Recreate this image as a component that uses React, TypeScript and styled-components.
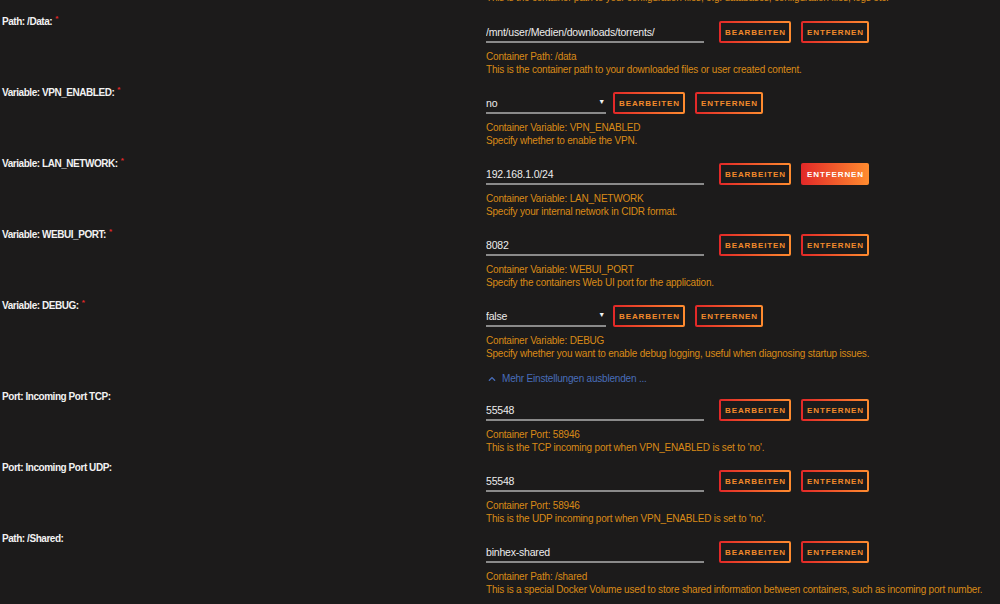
import { FC } from "react";
import styled, { createGlobalStyle, css } from "styled-components";
import { FaChevronUp } from "react-icons/fa";

const GlobalStyle = createGlobalStyle`
  html, body {
    margin: 0;
    padding: 0;
    background: #1c1b1b;
    color: #f2f2f2;
    font-family: "Liberation Sans", Arial, sans-serif;
    font-size: 10px;
    letter-spacing: -0.2px;
  }
`;

const Page = styled.div`
  width: 1000px;
  height: 604px;
  overflow: hidden;
`;

const PrevNote = styled.div`
  margin: -9px 0 4px 486px;
  line-height: 13px;
  color: #d98a17;
  white-space: nowrap;
`;

const Row = styled.div`
  display: grid;
  grid-template-columns: 486px 1fr;
`;

const Label = styled.div`
  padding: 4px 0 0 2px;
  line-height: 14px;
  font-size: 10px;
  font-weight: 700;
  letter-spacing: -0.45px;
  color: #f2f2f2;
  white-space: nowrap;
  sup {
    color: #e22828;
    font-size: 8px;
    margin-left: 3px;
  }
`;

const Field = styled.div`
  padding-top: 13px;
  padding-bottom: 3px;
`;

const Controls = styled.div<{ $narrow?: boolean }>`
  display: flex;
  align-items: center;
  height: 22px;
  gap: 10px;
  > :first-child {
    margin-right: ${(p) => (p.$narrow ? "-3px" : "5px")};
  }
`;

const fieldLine = css`
  height: 22px;
  box-sizing: border-box;
  padding: 1px 0 0 0;
  background: transparent;
  border: none;
  border-bottom: 2px solid #8a8a8a;
  color: #ececec;
  font: inherit;
  font-size: 10.5px;
  letter-spacing: -0.2px;
  outline: none;
`;

const TextInput = styled.input`
  ${fieldLine};
  width: 218px;
`;

const SelectWrap = styled.div`
  position: relative;
  width: 120px;
  height: 22px;
`;

const Select = styled.select`
  ${fieldLine};
  appearance: none;
  width: 100%;
`;

const Caret = styled.span`
  position: absolute;
  right: 1px;
  top: 6px;
  font-size: 7px;
  color: #f2f2f2;
  pointer-events: none;
`;

const Button = styled.button<{ $hot?: boolean }>`
  height: 22px;
  padding: 0 3px 0 4px;
  border-radius: 2px;
  border: 2px solid transparent;
  font-family: "Liberation Sans", Arial, sans-serif;
  font-size: 8px;
  font-weight: 700;
  letter-spacing: 0.9px;
  text-transform: uppercase;
  cursor: pointer;
  ${(p) =>
    p.$hot
      ? css`
          color: #fff;
          background: linear-gradient(90deg, #e22828 0%, #ff8c2f 100%) border-box;
        `
      : css`
          color: #f28a2b;
          background:
            linear-gradient(#1c1b1b, #1c1b1b) padding-box,
            linear-gradient(90deg, #e22828 0%, #ff8c2f 100%) border-box;
        `}
`;

const Note = styled.div`
  margin-top: 7px;
  line-height: 13px;
  color: #d98a17;
  white-space: nowrap;
`;

const MoreLink = styled.a`
  display: flex;
  align-items: center;
  gap: 6px;
  margin: 9px 0 0 488px;
  line-height: 14px;
  color: #486dba;
  text-decoration: none;
  cursor: pointer;
`;

interface IConfigRow {
  label: string;
  required?: boolean;
  value: string;
  options?: string[];
  hot?: boolean;
  target: string;
  description: string;
}

const rows: IConfigRow[] = [
  {
    label: "Path: /Data:",
    required: true,
    value: "/mnt/user/Medien/downloads/torrents/",
    target: "Container Path: /data",
    description: "This is the container path to your downloaded files or user created content.",
  },
  {
    label: "Variable: VPN_ENABLED:",
    required: true,
    value: "no",
    options: ["yes", "no"],
    target: "Container Variable: VPN_ENABLED",
    description: "Specify whether to enable the VPN.",
  },
  {
    label: "Variable: LAN_NETWORK:",
    required: true,
    value: "192.168.1.0/24",
    hot: true,
    target: "Container Variable: LAN_NETWORK",
    description: "Specify your internal network in CIDR format.",
  },
  {
    label: "Variable: WEBUI_PORT:",
    required: true,
    value: "8082",
    target: "Container Variable: WEBUI_PORT",
    description: "Specify the containers Web UI port for the application.",
  },
  {
    label: "Variable: DEBUG:",
    required: true,
    value: "false",
    options: ["true", "false"],
    target: "Container Variable: DEBUG",
    description:
      "Specify whether you want to enable debug logging, useful when diagnosing startup issues.",
  },
  {
    label: "Port: Incoming Port TCP:",
    value: "55548",
    target: "Container Port: 58946",
    description: "This is the TCP incoming port when VPN_ENABLED is set to 'no'.",
  },
  {
    label: "Port: Incoming Port UDP:",
    value: "55548",
    target: "Container Port: 58946",
    description: "This is the UDP incoming port when VPN_ENABLED is set to 'no'.",
  },
  {
    label: "Path: /Shared:",
    value: "binhex-shared",
    target: "Container Path: /shared",
    description:
      "This is a special Docker Volume used to store shared information between containers, such as incoming port number.",
  },
];

const ConfigRow: FC<{ row: IConfigRow }> = ({ row }) => (
  <Row>
    <Label>
      {row.label}
      {row.required && <sup>*</sup>}
    </Label>
    <Field>
      <Controls $narrow={!!row.options}>
        {row.options ? (
          <SelectWrap>
            <Select defaultValue={row.value}>
              {row.options.map((o) => (
                <option key={o}>{o}</option>
              ))}
            </Select>
            <Caret>▼</Caret>
          </SelectWrap>
        ) : (
          <TextInput defaultValue={row.value} />
        )}
        <Button>Bearbeiten</Button>
        <Button $hot={row.hot}>Entfernen</Button>
      </Controls>
      <Note>
        {row.target}
        <br />
        {row.description}
      </Note>
    </Field>
  </Row>
);

export default function App() {
  return (
    <Page>
      <GlobalStyle />
      <PrevNote>
        This is the container path to your configuration files, e.g. databases, configuration files, logs etc.
      </PrevNote>
      {rows.slice(0, 5).map((r) => (
        <ConfigRow key={r.label} row={r} />
      ))}
      <MoreLink>
        <FaChevronUp size={8} />
        Mehr Einstellungen ausblenden ...
      </MoreLink>
      {rows.slice(5).map((r) => (
        <ConfigRow key={r.label} row={r} />
      ))}
    </Page>
  );
}
